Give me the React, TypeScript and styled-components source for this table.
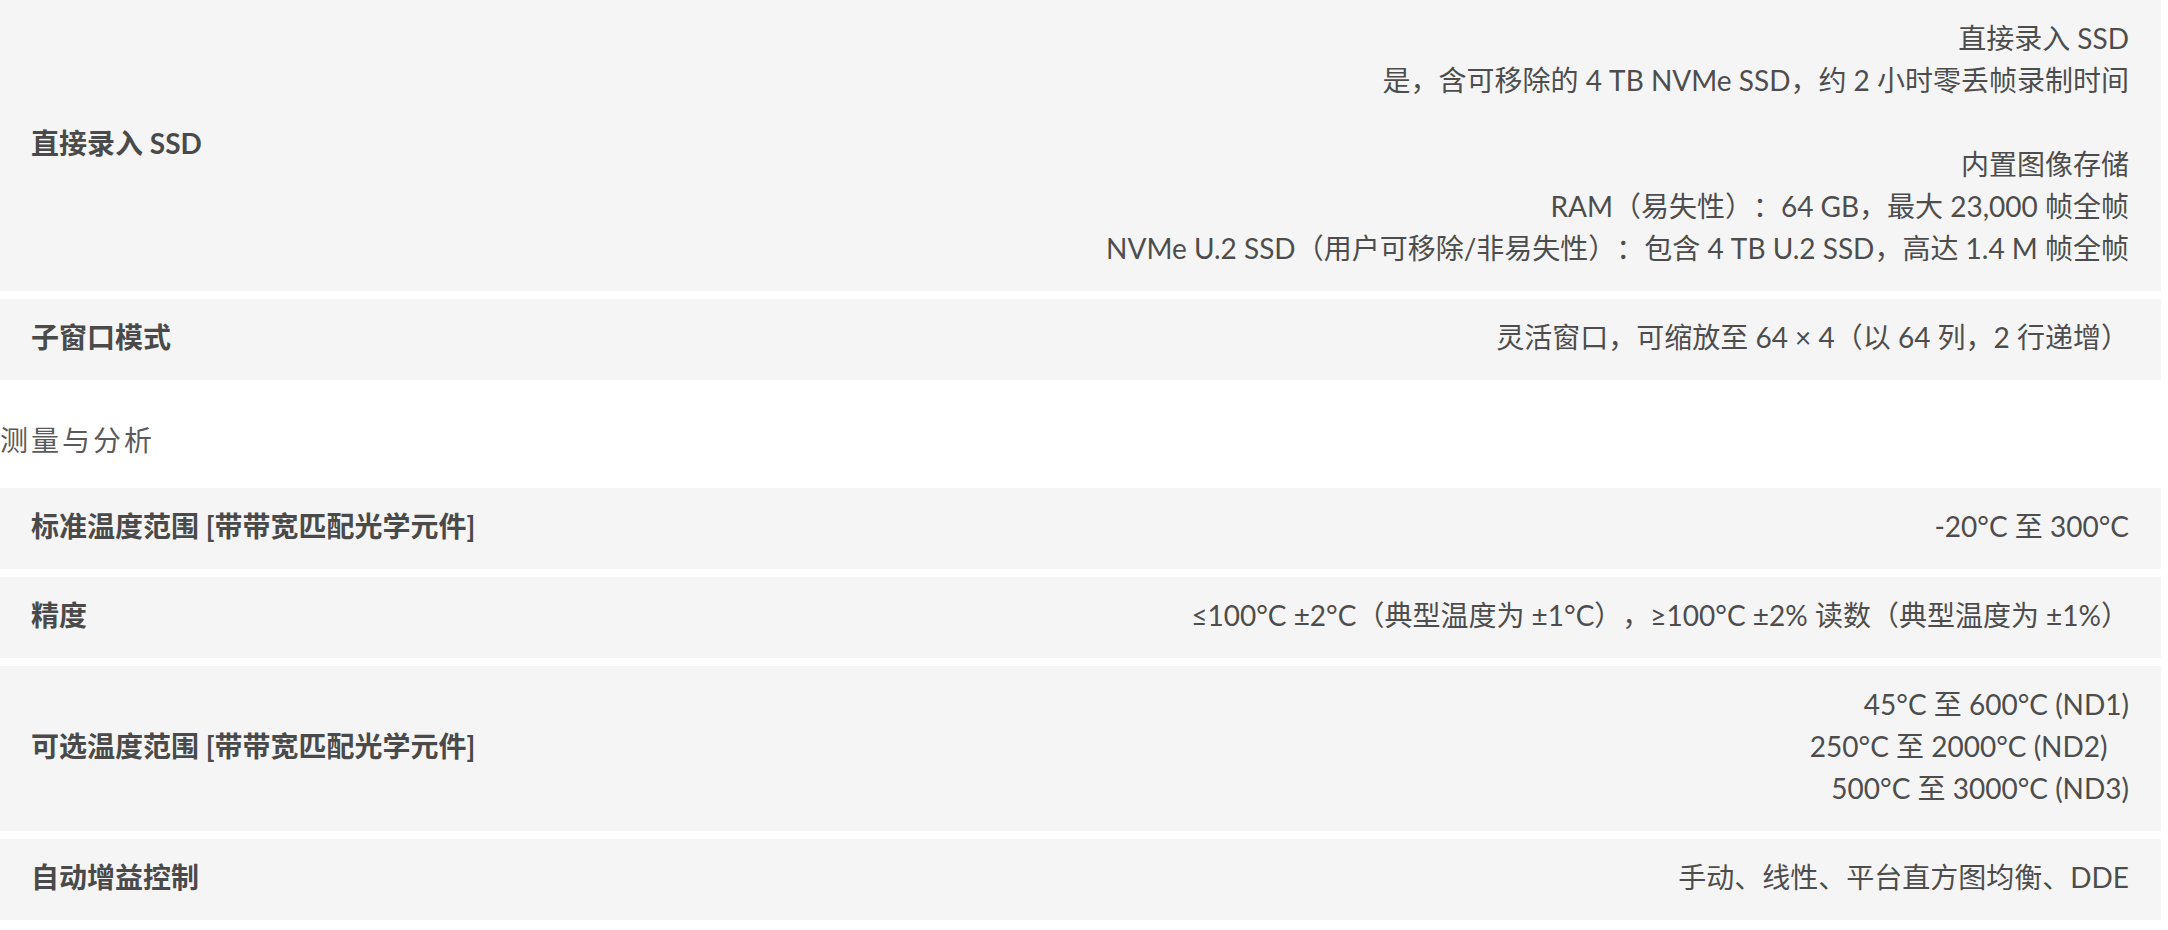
import { FC } from "react"
import styled, { createGlobalStyle } from 'styled-components';

const GlobalStyle = createGlobalStyle`
    html, body {
        margin: 0;
        padding: 0;
        background: #fff;
    }
    body {
        font-family: Lato, "Noto Sans CJK SC", sans-serif;
        color: #4a4a4a;
        text-spacing-trim: space-all;
    }
`

type TSpec = {
    label: string
    lines: string[]
}

const storage: TSpec[] = [
    {
        label: '直接录入 SSD',
        lines: [
            '直接录入 SSD',
            '是，含可移除的 4 TB NVMe SSD，约 2 小时零丢帧录制时间',
            '',
            '内置图像存储',
            'RAM（易失性）：64 GB，最大 23,000 帧全帧',
            'NVMe U.2 SSD（用户可移除/非易失性）：包含 4 TB U.2 SSD，高达 1.4 M 帧全帧',
        ],
    },
    {
        label: '子窗口模式',
        lines: ['灵活窗口，可缩放至 64 × 4（以 64 列，2 行递增）'],
    },
]

const measurement: TSpec[] = [
    {
        label: '标准温度范围 [带带宽匹配光学元件]',
        lines: ['-20°C 至 300°C'],
    },
    {
        label: '精度',
        lines: ['≤100°C ±2°C（典型温度为 ±1°C），≥100°C ±2% 读数（典型温度为 ±1%）'],
    },
    {
        label: '可选温度范围 [带带宽匹配光学元件]',
        lines: ['45°C 至 600°C (ND1)', '250°C 至 2000°C (ND2)\u00a0\u00a0\u00a0', '500°C 至 3000°C (ND3)'],
    },
    {
        label: '自动增益控制',
        lines: ['手动、线性、平台直方图均衡、DDE'],
    },
]

const SpecRow: FC<{ spec: TSpec }> = ({ spec }) => {
    return (
        <Row>
            <Label>{spec.label}</Label>
            <Value>
                {spec.lines.map((line, i) => (
                    <Line key={i}>{line || '\u00a0'}</Line>
                ))}
            </Value>
        </Row>
    )
}

export default function App() {
    return (
        <>
            <GlobalStyle />
            <Page>
                <Table>
                    {storage.map((s) => <SpecRow key={s.label} spec={s} />)}
                </Table>
                <SectionTitle>测量与分析</SectionTitle>
                <Table>
                    {measurement.map((s) => <SpecRow key={s.label} spec={s} />)}
                </Table>
            </Page>
        </>
    )
}

const Page = styled.div`
    width: 2161px;
    padding-bottom: 10px;
`

const Table = styled.div`
    display: flex;
    flex-direction: column;
    gap: 8px;
`

const Row = styled.div`
    display: flex;
    align-items: center;
    justify-content: space-between;
    background: #f5f5f5;
    padding: 17px 32px 22px 31px;
    font-size: 28px;
    line-height: 42px;
`

const Label = styled.div`
    font-weight: 700;
    color: #4a4a4a;
    white-space: nowrap;
`

const Value = styled.div`
    text-align: right;
    color: #4d4d4d;
`

const Line = styled.div`
    white-space: pre;
`

const SectionTitle = styled.div`
    font-size: 28px;
    line-height: 42px;
    letter-spacing: 3px;
    color: #5a5a5a;
    padding: 39px 0 27px 0;
`
